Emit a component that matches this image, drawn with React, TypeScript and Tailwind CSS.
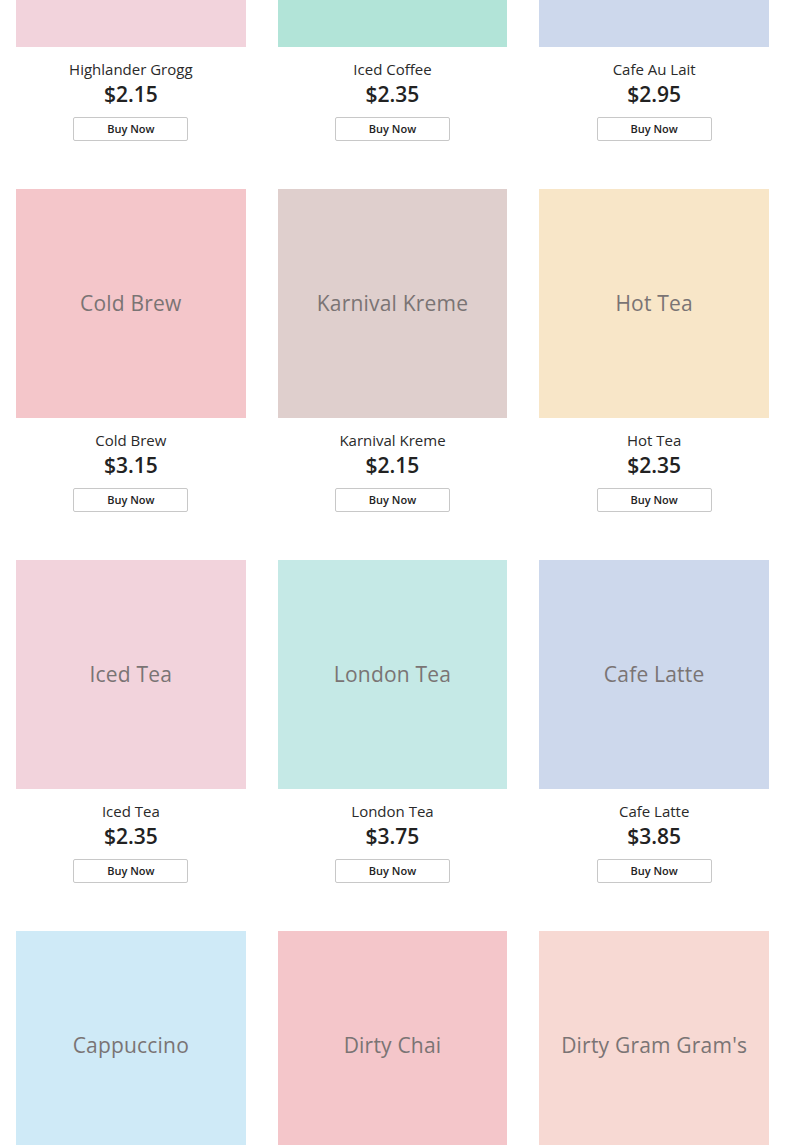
import React from "react";

const items = [
  { name: "Highlander Grogg", price: "$2.15", bg: "bg-[#f2d3dc]" },
  { name: "Iced Coffee", price: "$2.35", bg: "bg-[#b2e4d8]" },
  { name: "Cafe Au Lait", price: "$2.95", bg: "bg-[#cdd8ec]" },
  { name: "Cold Brew", price: "$3.15", bg: "bg-[#f4c6ca]" },
  { name: "Karnival Kreme", price: "$2.15", bg: "bg-[#dfcfcd]" },
  { name: "Hot Tea", price: "$2.35", bg: "bg-[#f8e6c8]" },
  { name: "Iced Tea", price: "$2.35", bg: "bg-[#f2d3dc]" },
  { name: "London Tea", price: "$3.75", bg: "bg-[#c5e9e6]" },
  { name: "Cafe Latte", price: "$3.85", bg: "bg-[#cdd8ec]" },
  { name: "Cappuccino", price: "$3.25", bg: "bg-[#cfeaf7]" },
  { name: "Dirty Chai", price: "$3.95", bg: "bg-[#f4c6ca]" },
  { name: "Dirty Gram Gram's", price: "$3.95", bg: "bg-[#f7d9d3]" },
];

export default function App() {
  return (
    <div
      className="w-full h-[1145px] overflow-hidden bg-white"
      style={{ fontFamily: '"Open Sans", "Noto Sans", sans-serif' }}
    >
      <div className="-mt-[182px] grid grid-cols-3 gap-x-8 px-4">
        {items.map((it) => (
          <div key={it.name} className="flex flex-col items-center pb-[48px]">
            <div
              className={`w-full h-[229px] ${it.bg} flex items-center justify-center`}
            >
              <span className="text-[21px] text-[#7a7474] tracking-[0.2px]">
                {it.name}
              </span>
            </div>
            <div className="mt-[12px] text-[15px] leading-[21px] text-[#2a2a2a]">
              {it.name}
            </div>
            <div className="mt-[2px] text-[21px] leading-[24px] font-semibold text-[#222]">
              {it.price}
            </div>
            <button className="mt-[11px] h-[24px] w-[115px] border border-[#c8c8c8] rounded-[2px] bg-white text-[11px] font-semibold text-[#222] flex items-center justify-center">
              Buy Now
            </button>
          </div>
        ))}
      </div>
    </div>
  );
}
